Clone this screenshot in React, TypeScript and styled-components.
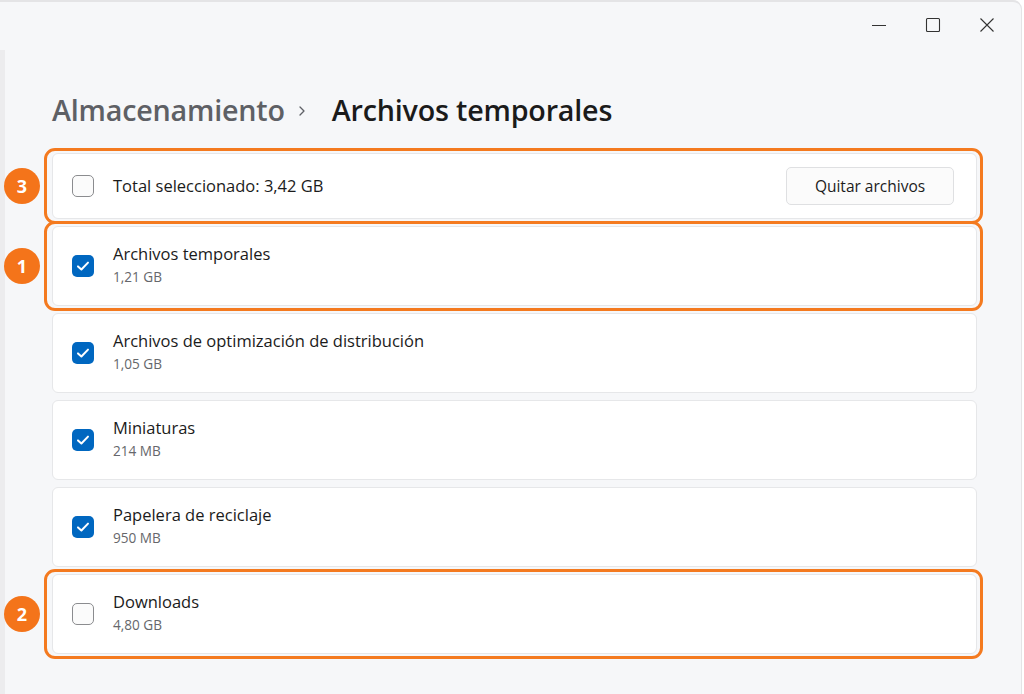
import styled, { createGlobalStyle } from "styled-components";

const GlobalStyle = createGlobalStyle`
    html, body {
        margin: 0;
        padding: 0;
        background: #ffffff;
    }
    * {
        box-sizing: border-box;
    }
`;

type Item = {
    label: string;
    size: string;
    checked: boolean;
    mark?: number;
};

const items: Item[] = [
    {label: "Archivos temporales", size: "1,21 GB", checked: true, mark: 1},
    {label: "Archivos de optimización de distribución", size: "1,05 GB", checked: true},
    {label: "Miniaturas", size: "214 MB", checked: true},
    {label: "Papelera de reciclaje", size: "950 MB", checked: true},
    {label: "Downloads", size: "4,80 GB", checked: false, mark: 2},
];

const CheckIcon = () => (
    <svg width="16" height="16" viewBox="0 0 16 16" fill="none">
        <path d="M3 8.4 L6.4 11.5 L13 4.6" stroke="#fff" strokeWidth="2" strokeLinecap="round"
              strokeLinejoin="round"/>
    </svg>
);

const Check = ({checked}: { checked: boolean }) => (
    <CheckBox checked={checked}>{checked && <CheckIcon/>}</CheckBox>
);

const Row = ({mark, children, tall}: { mark?: number; children: React.ReactNode; tall?: boolean }) => (
    <RowWrap>
        <Card tall={tall}>{children}</Card>
        {mark !== undefined && (
            <>
                <Outline/>
                <Badge>{mark}</Badge>
            </>
        )}
    </RowWrap>
);

export default function App() {
    return (
        <>
            <GlobalStyle/>
            <Window>
                <SideEdge/>
                <Main>
                    <TitleBar>
                        <CaptionButton aria-label="Minimizar">
                            <svg width="16" height="16" viewBox="0 0 16 16">
                                <path d="M1 8.5 H15" stroke="#333" strokeWidth="1"/>
                            </svg>
                        </CaptionButton>
                        <CaptionButton aria-label="Maximizar">
                            <svg width="16" height="16" viewBox="0 0 16 16" fill="none">
                                <rect x="1.5" y="1.5" width="13" height="13" rx="1" stroke="#333" strokeWidth="1.1"/>
                            </svg>
                        </CaptionButton>
                        <CaptionButton aria-label="Cerrar">
                            <svg width="16" height="16" viewBox="0 0 16 16">
                                <path d="M1.5 1.5 L14.5 14.5 M14.5 1.5 L1.5 14.5" stroke="#333" strokeWidth="1.1"/>
                            </svg>
                        </CaptionButton>
                    </TitleBar>

                    <Breadcrumb>
                        <Crumb>Almacenamiento</Crumb>
                        <Chevron>
                            <svg width="10" height="12" viewBox="0 0 10 12" fill="none">
                                <path d="M3 2 L7 6 L3 10" stroke="#5f6166" strokeWidth="1.3" strokeLinecap="round"
                                      strokeLinejoin="round"/>
                            </svg>
                        </Chevron>
                        <Current>Archivos temporales</Current>
                    </Breadcrumb>

                    <List>
                        <Row mark={3}>
                            <Check checked={false}/>
                            <Label>Total seleccionado: 3,42 GB</Label>
                            <Spacer/>
                            <Button>Quitar archivos</Button>
                        </Row>
                        {items.map((item) => (
                            <Row key={item.label} mark={item.mark} tall>
                                <Check checked={item.checked}/>
                                <TextBlock>
                                    <Label>{item.label}</Label>
                                    <Size>{item.size}</Size>
                                </TextBlock>
                            </Row>
                        ))}
                    </List>
                </Main>
            </Window>
        </>
    );
}

const Window = styled.div`
    display: flex;
    width: 1022px;
    height: 694px;
    background: #f6f7f9;
    border-top: 2px solid #e4e4e6;
    border-right: 1px solid #e4e4e6;
    border-top-right-radius: 9px;
    overflow: hidden;
    font-family: "Open Sans", "Noto Sans", sans-serif;
    color: #1b1b1b;
`;

const SideEdge = styled.div`
    width: 5px;
    margin-top: 48px;
    background: #ececee;
`;

const Main = styled.div`
    flex: 1;
    display: flex;
    flex-direction: column;
    padding: 0 44px 0 47px;
`;

const TitleBar = styled.div`
    display: flex;
    justify-content: flex-end;
    height: 46px;
    margin-right: -37px;
`;

const CaptionButton = styled.button`
    width: 54px;
    height: 46px;
    display: flex;
    align-items: center;
    justify-content: center;
    border: none;
    background: transparent;
    padding: 0;
`;

const Breadcrumb = styled.div`
    display: flex;
    align-items: center;
    margin-top: 42px;
    height: 38px;
`;

const Crumb = styled.span`
    font-size: 28.7px;
    font-weight: 600;
    color: #5e6065;
    letter-spacing: -0.2px;
`;

const Chevron = styled.span`
    display: flex;
    align-items: center;
    margin: 3px 25px 0 12px;
`;

const Current = styled.span`
    font-size: 28.7px;
    font-weight: 600;
    color: #1b1b1b;
    letter-spacing: -0.2px;
`;

const List = styled.div`
    display: flex;
    flex-direction: column;
    gap: 7px;
    margin-top: 25px;
`;

const RowWrap = styled.div`
    position: relative;
`;

const Card = styled.div<{ tall?: boolean }>`
    display: flex;
    align-items: center;
    height: ${({tall}) => (tall ? "80px" : "66px")};
    padding: 0 22px 0 19px;
    background: #ffffff;
    border: 1px solid #e6e7e9;
    border-radius: 6px;
`;

const Outline = styled.div`
    position: absolute;
    inset: -5px -6px -5px -8px;
    border: 3px solid #f47a1f;
    border-radius: 11px;
    pointer-events: none;
`;

const Badge = styled.div`
    position: absolute;
    left: -48px;
    top: 50%;
    transform: translateY(-50%);
    width: 36px;
    height: 36px;
    border-radius: 50%;
    background: #f4741a;
    color: #ffffff;
    font-size: 18px;
    font-weight: 700;
    display: flex;
    align-items: center;
    justify-content: center;
`;

const CheckBox = styled.span<{ checked: boolean }>`
    flex: none;
    width: 22px;
    height: 22px;
    border-radius: 5px;
    display: flex;
    align-items: center;
    justify-content: center;
    background: ${({checked}) => (checked ? "#0067c0" : "#fbfbfb")};
    border: ${({checked}) => (checked ? "none" : "1.5px solid #8b8c8f")};
    margin-right: 19px;
`;

const TextBlock = styled.div`
    display: flex;
    flex-direction: column;
    gap: 2px;
    margin-top: -2px;
`;

const Label = styled.span`
    font-size: 16.5px;
    color: #1b1b1b;
    line-height: 22px;
`;

const Size = styled.span`
    font-size: 13.6px;
    color: #66676b;
    line-height: 20px;
`;

const Spacer = styled.div`
    flex: 1;
`;

const Button = styled.button`
    width: 168px;
    height: 38px;
    border: 1px solid #dfe0e2;
    border-radius: 5px;
    background: #fbfbfb;
    font-family: "Open Sans", "Noto Sans", sans-serif;
    font-size: 15.5px;
    color: #1b1b1b;
`;
